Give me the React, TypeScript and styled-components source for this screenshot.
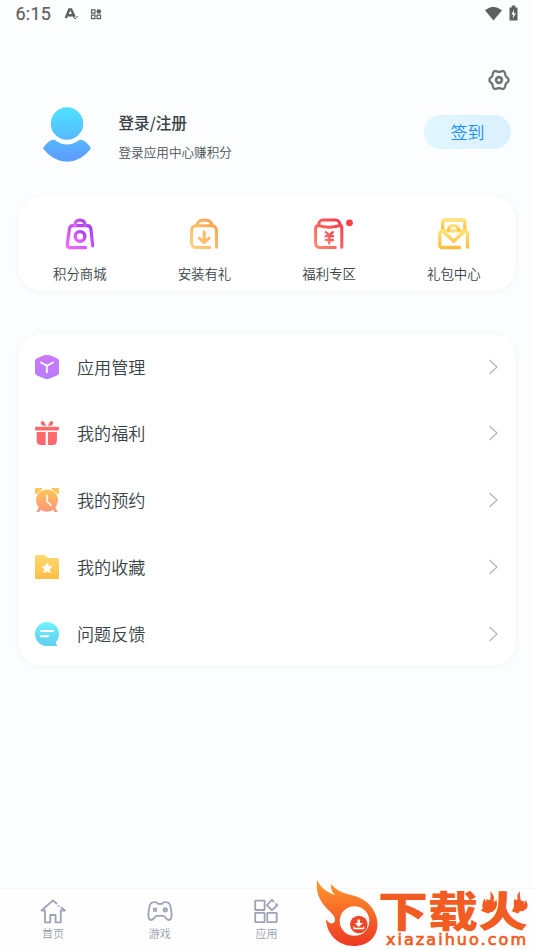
import React from "react";
import styled, { createGlobalStyle } from "styled-components";

const Global = createGlobalStyle`
  * { box-sizing: border-box; }
  body { margin: 0; background: #fcfdff; font-family: "Noto Sans CJK SC", sans-serif; font-weight: 350; color: #394247; }
  svg { display: block; flex: none; overflow: visible; }
`;

const Screen = styled.div`
  width: 534px; height: 950px; position: relative; overflow: hidden;
  display: flex; flex-direction: column; background: #fcfdff;
`;
const StatusBar = styled.header`
  height: 28px; padding: 0 17px 0 15.5px; display: flex; align-items: center; color: #5e605f;
`;
const Clock = styled.span`
  font: 400 18px/28px Roboto, sans-serif; letter-spacing: 0.2px; width: 48px;
  -webkit-text-stroke: 0.2px #5e605f;
`;
const Spacer = styled.div`flex: 1;`;
const Toolbar = styled.div`
  height: 74px; padding: 41px 24px 0 0; display: flex; justify-content: flex-end; align-items: flex-start;
`;
const Profile = styled.section`
  height: 94px; padding: 0 23px 0 42px; display: flex; align-items: flex-start;
`;
const AvatarBox = styled.div`width: 76.5px; padding-top: 5px;`;
const ProfileText = styled.div`flex: 1; padding-top: 8px;`;
const Name = styled.h1`margin: 0; font-size: 15.6px; line-height: 24px; font-weight: 500;`;
const Hint = styled.p`margin: 8px 0 0; font-size: 12.6px; line-height: 20px; font-weight: 350; color: #4b5054;`;
const SignButton = styled.button`
  margin-top: 13px; width: 87px; height: 34px; border: 0; border-radius: 17px; padding: 0 0 1px;
  background: linear-gradient(90deg, #dff6ff, #dcf0ff); color: #168dfb;
  font: 350 17px/33px "Noto Sans CJK SC", sans-serif;
`;
const Card = styled.section`
  margin: 0 18px 0 17.5px; background: #fff; border-radius: 24px; flex: none;
  box-shadow: 0 1px 5px rgba(80, 105, 120, 0.07);
`;
const ShortcutCard = styled(Card)`
  height: 95px; display: grid; grid-template-columns: repeat(4, 124.67px);
`;
const Shortcut = styled.div`
  display: flex; flex-direction: column; align-items: center; padding-top: 22px;
  font-size: 13.4px; line-height: 20px;
  svg { margin-bottom: 13px; }
`;
const ListCard = styled(Card)`height: 332px; margin-top: 42.5px;`;
const Row = styled.div`
  height: 66.8px; padding: 0 18px 0 17.5px; display: flex; align-items: center;
  &:first-child { margin-top: -0.4px; }
`;
const RowLabel = styled.span`flex: 1; margin-left: 18px; font-size: 17.1px; line-height: 26px;`;
const BottomNav = styled.nav`
  height: 62px; margin-top: auto; border-top: 1px solid #f6f7f8; background: #fefeff;
  display: grid; grid-template-columns: repeat(5, 106.8px);
`;
const NavItem = styled.div`
  display: flex; flex-direction: column; align-items: center; padding: 9px 1px 0 0;
  color: #9a9fae; font-size: 11px; line-height: 16px;
  svg { margin-bottom: 1px; }
`;
const Watermark = styled.div`
  position: absolute; left: 315px; bottom: 0; width: 219px; height: 73px; display: flex;
`;
const WatermarkText = styled.div`
  margin-left: -5px; width: 157px; color: #f15c22; display: flex; flex-direction: column;
`;
const BrandLine = styled.div`
  height: 42px; margin-top: 11px; margin-left: 3px; position: relative;
  font: 900 50px/42px "Noto Sans CJK SC", sans-serif; white-space: nowrap;
  transform: scaleY(0.84); transform-origin: 50% 50%;
`;
const Domain = styled.div`
  font: 400 16px/18px "DejaVu Sans", sans-serif; letter-spacing: 2.05px;
  -webkit-text-stroke: 0.7px #f15c22;
  margin: 1px 0 0 11px; white-space: nowrap;
`;

const Gradient = ({ id, from, to, flip = false }: { id: string; from: string; to: string; flip?: boolean }) => (
  <defs>
    <linearGradient id={id} x1={flip ? "1" : "0"} y1="0" x2="0" y2="1">
      <stop offset="0" stopColor={from} /><stop offset="1" stopColor={to} />
    </linearGradient>
  </defs>
);

const MallIcon = () => (
  <svg width="30" height="32" viewBox="0 0 30 32" fill="none" stroke="url(#mall)" strokeWidth="3.2" strokeLinecap="round" strokeLinejoin="round">
    <Gradient id="mall" from="#a63df0" to="#ef6cff" flip />
    <path d="M27.7 27.8 25.9 11Q25.5 7.7 22.3 7.7H8Q4.8 7.7 4.4 11L2.3 26.3Q2 29.7 5.2 29.7H20.5" />
    <path d="M9.7 7.2C10.2 3.8 12 2.2 15 2.2S19.8 3.8 20.3 7.2" /><circle cx="15" cy="18.4" r="4.8" strokeWidth="3.4" />
  </svg>
);
const InstallIcon = () => (
  <svg width="30" height="32" viewBox="0 0 30 32" fill="none" stroke="url(#install)" strokeWidth="3" strokeLinecap="round" strokeLinejoin="round">
    <Gradient id="install" from="#ff9d49" to="#ffd27d" flip />
    <path d="M27.5 29.3V13Q27.5 7.7 22.5 7.7H7.5Q2.5 7.7 2.5 13V24.5Q2.5 29.6 7.5 29.6H20.8M7.5 7.5Q9.5 2.3 13 2.3H18Q21.5 2.3 23.5 7.5M15.2 14V24M10.2 20.2L15.2 24.5 20.2 20.2" />
  </svg>
);
const WelfareIcon = () => (
  <svg width="30" height="32" viewBox="0 0 30 32" fill="none" stroke="url(#welfare)" strokeWidth="3" strokeLinecap="round" strokeLinejoin="round">
    <Gradient id="welfare" from="#f8374c" to="#ff8a6d" flip />
    <path d="M27.8 29.3V9.5L25 3.9Q24 2.1 21.8 2.1H8.7Q6.5 2.1 5.4 4L4.3 7.2Q1.6 8 1.6 11V25Q1.6 29.5 6.2 29.5H21.3M4.5 7.5Q15 11 26 7.5" />
    <path d="M11.8 14.2 15.3 17.3 18.8 14.2M11.6 18.2H19M11.6 22H19M15.3 17.8V25.5" strokeWidth="2.3" />
    <circle cx="35.5" cy="4.8" r="3.4" fill="#f94147" stroke="none" />
  </svg>
);
const GiftCenterIcon = () => (
  <svg width="31" height="32" viewBox="0 0 31 32" fill="none" stroke="url(#pack)" strokeWidth="3.3" strokeLinecap="round" strokeLinejoin="round">
    <Gradient id="pack" from="#ffe17a" to="#ffbd40" />
    <path d="M4.7 11.5V3.5Q4.7 2 6.2 2H25Q26.8 2 26.8 3.5V11.5" />
    <path d="M29.5 29.2V15.5Q29.5 13.5 27 12.8L15.7 23.2 4.3 12.8Q1.8 13.5 1.8 15.8V27Q1.8 29.5 4.3 29.5H21.5M4.3 12.8H27" />
    <path d="M10.5 12C11 5.8 20 5.8 20.7 12" />
  </svg>
);

const AppsIcon = () => (
  <svg width="24" height="24" viewBox="0 0 24 24"><Gradient id="apps" from="#cd79f5" to="#b77cff" />
    <path fill="url(#apps)" d="M9 .3Q12-.4 15 .3L22.5 3.6Q24 4.5 24 6.3V17.6Q24 19.2 22.5 20.2L14 23.7Q12 24.5 10 23.7L1.5 20.2Q0 19.2 0 17.6V6.3Q0 4.5 1.5 3.6Z" />
    <path d="M6 7.5 11.8 10.7 18 7.5M11.8 10.7V17.3" fill="none" stroke="#fff" strokeWidth="1.8" strokeLinecap="round" />
  </svg>
);
const PresentIcon = () => (
  <svg width="24" height="24" viewBox="0 0 24 24" fill="#ff686c">
    <path d="M0 7Q0 5.8 1.2 5.8H22.8Q24 5.8 24 7V8.5Q24 9.5 22.8 9.5H1.2Q0 9.5 0 8.5ZM1.7 11H10.7V24H6Q1.7 24 1.7 19.5ZM12.9 11H21.9V19.5Q21.9 24 17.5 24H12.9Z" />
    <path d="M11 5Q5.4 4.7 5.8 1.5 6.7-1.3 9.3 1.1ZM13 5Q18.6 4.7 18.2 1.5 17.3-1.3 14.7 1.1Z" />
  </svg>
);
const AlarmIcon = () => (
  <svg width="24" height="24" viewBox="0 0 24 24"><Gradient id="alarm" from="#ffc655" to="#ff947c" />
    <path fill="#ffc75b" d="M1 0H6.7Q8 .3 7 1.5L1.5 6H0V1Q0 0 1 0ZM17.3 0H23Q24 0 24 1V6H22.5L17 1.5Q16 .3 17.3 0Z" />
    <path fill="url(#alarm)" d="M8 2.2Q12 1 16 2.2 21 4 22.6 9 24 15 20.3 19.5L22.8 24H19.8L18.2 21.8Q12 25.5 5.8 21.8L4.2 24H1.2L3.7 19.5Q0 15 1.4 9 3 4 8 2.2Z" />
    <path d="M12 7.5V13.5L16 17.4" fill="none" stroke="#fff" strokeWidth="1.6" strokeLinecap="round" />
  </svg>
);
const FolderIcon = () => (
  <svg width="24" height="24" viewBox="0 0 24 24"><Gradient id="folder" from="#ffda70" to="#ffbd42" />
    <path fill="url(#folder)" d="M1 0H9.5L12.8 3H23Q24 3 24 4V23Q24 24 23 24H1Q0 24 0 23V1Q0 0 1 0Z" />
    <path fill="#fff" stroke="#fff" strokeWidth=".7" strokeLinejoin="round" d="M12 8 13.6 11.2 17 11.7 14.5 14.2 15.1 17.7 12 16.1 8.9 17.7 9.5 14.2 7 11.7 10.4 11.2Z" />
  </svg>
);
const FeedbackIcon = () => (
  <svg width="24" height="24" viewBox="0 0 24 24"><Gradient id="feedback" from="#70f1fd" to="#61cef0" />
    <path fill="url(#feedback)" d="M12 0A12 12 0 0 1 24 12C24 15.5 22.8 18 20.8 20L22.3 24H12A12 12 0 0 1 12 0Z" />
    <path d="M6 9H18M6 14.2H13" fill="none" stroke="#fff" strokeWidth="2" strokeLinecap="round" />
  </svg>
);
const Arrow = () => (
  <svg width="9" height="16" viewBox="0 0 9 16" fill="none" stroke="#b8b8b8" strokeWidth="1.3"><path d="M.5 1 8 8 .5 15" /></svg>
);
const HomeIcon = () => (
  <svg width="26" height="26" viewBox="0 0 26 26" fill="none" stroke="#9ea4b5" strokeWidth="1.8" strokeLinejoin="round">
    <path d="M17 6.2 13 2.4 1.5 12.5H5V24.4H10.3V17H15.6V24.4H20.8V12.5H25L20.8 9.3" /><path d="M18.5 7.3V9" />
  </svg>
);
const GameIcon = () => (
  <svg width="26" height="26" viewBox="0 0 26 26" fill="none" stroke="#9ea4b5" strokeWidth="1.8" strokeLinejoin="round">
    <path d="M6.5 4.2Q10 3.7 11 5.8H15Q16 3.7 19.5 4.2C22.3 4.4 23.2 6.2 23.8 10C25 16 25.2 22 22 22C19.7 22 19.6 20 16.5 17.8H9.5C6.4 20 6.3 22 4 22C.8 22 1 16 2.2 10C2.8 6.2 3.7 4.4 6.5 4.2Z" />
    <path d="M6.2 10 9.8 13.6M9.8 10 6.2 13.6" /><circle cx="18.3" cy="11.8" r="1.6" strokeWidth="2" />
  </svg>
);
const GridIcon = () => (
  <svg width="26" height="26" viewBox="0 0 26 26" fill="none" stroke="#9ea4b5" strokeWidth="1.8">
    <rect x="2.2" y="2.6" width="9.4" height="9.4" rx=".5" /><rect x="2.2" y="14.8" width="9.4" height="9.4" rx=".5" /><rect x="14.3" y="14.8" width="9.4" height="9.4" rx=".5" />
    <path d="M21.2 4.2 18.9 2 13.9 7.2 18.9 12.2 24.3 7.2 22.6 5.5" />
  </svg>
);

const shortcuts = [
  { label: "积分商城", Icon: MallIcon }, { label: "安装有礼", Icon: InstallIcon },
  { label: "福利专区", Icon: WelfareIcon }, { label: "礼包中心", Icon: GiftCenterIcon },
];
const rows = [
  { label: "应用管理", Icon: AppsIcon }, { label: "我的福利", Icon: PresentIcon }, { label: "我的预约", Icon: AlarmIcon },
  { label: "我的收藏", Icon: FolderIcon }, { label: "问题反馈", Icon: FeedbackIcon },
];
const tabs = [{ label: "首页", Icon: HomeIcon }, { label: "游戏", Icon: GameIcon }, { label: "应用", Icon: GridIcon }];

const SystemIcons = () => (
  <svg width="38" height="14" viewBox="0 0 38 14" fill="none" stroke="#5e605f">
    <path d="M1.8 11 5.3 2.5H7.2L10.6 10M3.2 8.2H9" strokeWidth="2.4" /><path d="M9.4 10.4 11 12 13.7 9" />
    <path d="M27.5 2.8H31V6.2H27.5ZM27.5 8.2H31V11.7H27.5ZM33 8.2H36.5V11.7H33Z" strokeWidth="1.2" />
    <circle cx="34.8" cy="4.5" r="2.3" fill="#5e605f" stroke="none" />
  </svg>
);

/* Six-lobed outline: the radius swells once every sixty degrees. */
const gearPoints = Array.from({ length: 72 }, (_, i) => {
  const angle = (i * Math.PI) / 36;
  const radius = 8.7 + 0.9 * Math.cos(6 * angle);
  return `${(11 + radius * Math.cos(angle)).toFixed(2)},${(11 + radius * 1.03 * Math.sin(angle)).toFixed(2)}`;
}).join(" ");
const Gear = () => (
  <svg width="22" height="22" viewBox="0 0 22 22" fill="none" stroke="#727473" strokeWidth="2.3" strokeLinejoin="round">
    <polygon points={gearPoints} />
    <circle cx="11" cy="11" r="2.9" strokeWidth="2.6" />
  </svg>
);
const Avatar = () => (
  <svg width="50" height="56" viewBox="0 0 50 56">
    <defs><linearGradient id="avatar" gradientUnits="userSpaceOnUse" x1="0" y1="6" x2="0" y2="50"><stop stopColor="#50dcff" /><stop offset="1" stopColor="#5b9fff" /></linearGradient></defs>
    <g fill="url(#avatar)"><circle cx="25" cy="16.5" r="16.2" /><path d="M9 33.3Q12 32 14.5 34.2 25 41 35.5 34.2 38 32 41 33.3 45.5 35.5 49 41.5 39 54.5 25 54.8 11 54.5 1 41.5 4.5 35.5 9 33.3Z" /></g>
  </svg>
);
const FlameLogo = () => (
  <svg width="65" height="73" viewBox="0 0 65 73">
    <Gradient id="flame" from="#ff9a2c" to="#ee3824" />
    <path fill="url(#flame)" d="M2 3Q7 14 20 18 15 13 16 7 22 15 36 18C52 21 62.5 34 62.5 47C62.5 60 53 69 39 69C24 69 11.5 58 11 42C14 47 18 48 20 44C21 38 14 35 8 27C3 20 1 13 2 3Z" />
    <circle cx="39.5" cy="44" r="14.8" fill="#fff" /><circle cx="43.8" cy="47.5" r="8.8" fill="#ef4528" />
    <path fill="#fff" d="M42.5 42.5H45.1V46H48L43.8 50 39.6 46H42.5Z" /><path d="M39 49.5V51.5H48.6V49.5" fill="none" stroke="#fff" strokeWidth="1.3" />
  </svg>
);
const FlameOverlay = styled.svg`position: absolute; left: 103px; top: -1px;`;

export default function App() {
  return (
    <>
      <Global />
      <Screen>
        <StatusBar>
          <Clock>6:15</Clock><SystemIcons /><Spacer />
          <svg width="32" height="18" viewBox="0 0 32 18" fill="#5e605f">
            <path d="M0 5.2Q8-1.8 17 5.2L8.5 15.5Z" /><path d="M24.5 2.5H26.7V.5H30.3V2.5H32.5V15.5H24.5Z" />
            <path d="M29.2 4.5 26.3 9.5H28.3L27.5 13.7 31 8.2H28.9Z" fill="#fff" />
          </svg>
        </StatusBar>
        <Toolbar><Gear /></Toolbar>
        <Profile>
          <AvatarBox><Avatar /></AvatarBox>
          <ProfileText><Name>登录/注册</Name><Hint>登录应用中心赚积分</Hint></ProfileText>
          <SignButton>签到</SignButton>
        </Profile>
        <ShortcutCard>{shortcuts.map(({ label, Icon }) => <Shortcut key={label}><Icon />{label}</Shortcut>)}</ShortcutCard>
        <ListCard>{rows.map(({ label, Icon }) => <Row key={label}><Icon /><RowLabel>{label}</RowLabel><Arrow /></Row>)}</ListCard>
        <BottomNav>{tabs.map(({ label, Icon }) => <NavItem key={label}><Icon />{label}</NavItem>)}</BottomNav>
        <Watermark>
          <FlameLogo />
          <WatermarkText>
            <BrandLine>下载火
              <FlameOverlay width="50" height="32" viewBox="0 0 50 32" fill="#f15c22">
                <path d="M9 1Q15 7 12 14 15 13 15 10 18 19 12 25 5 29 2 21 0 15 4 9 4 15 7 17 11 10 9 1ZM39 1Q34 6 38 13 34 12 34 9 31 17 35 23 41 27 46 21 48 15 44 11 45 15 42 17 38 10 39 1Z" />
              </FlameOverlay>
            </BrandLine>
            <Domain>xiazaihuo.com</Domain>
          </WatermarkText>
        </Watermark>
      </Screen>
    </>
  );
}
